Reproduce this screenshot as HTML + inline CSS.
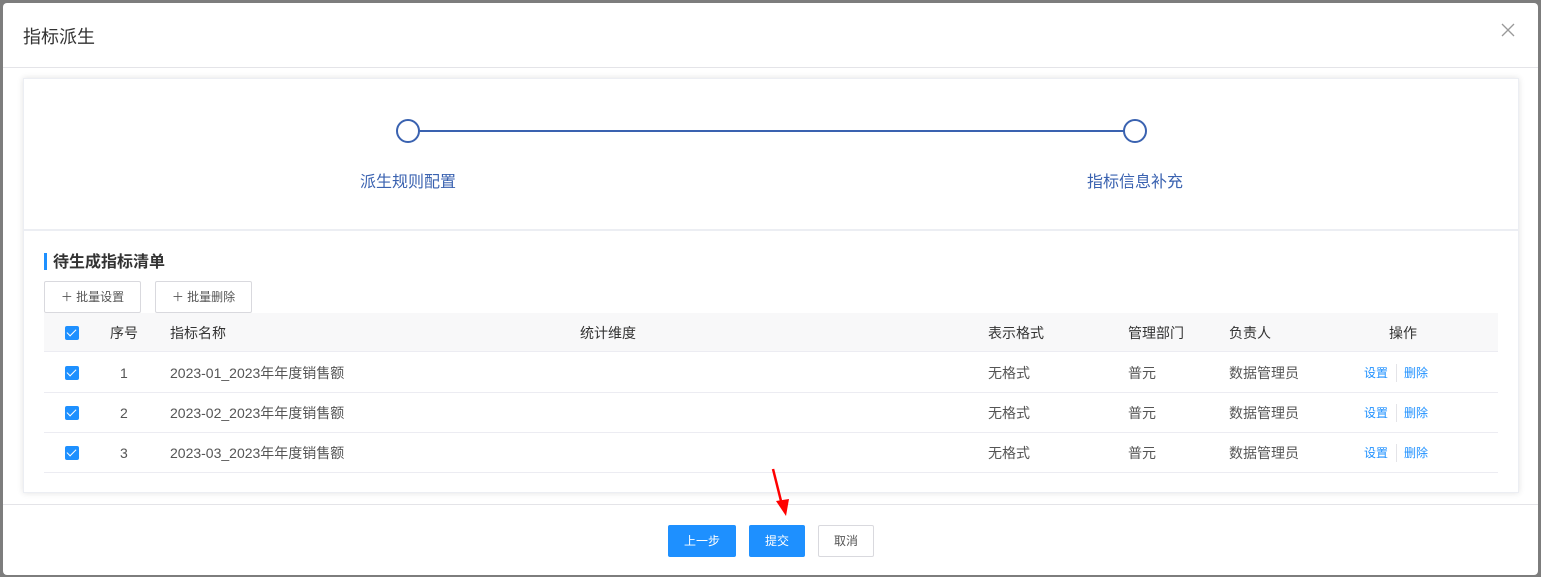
<!DOCTYPE html>
<html><head><meta charset="utf-8"><style>
*{margin:0;padding:0;box-sizing:border-box}
body{width:1541px;height:577px;background:#7d7d7d;font-family:"Liberation Sans","Noto Sans CJK SC",sans-serif;position:relative;overflow:hidden}
.dlg{position:absolute;left:3px;top:3px;width:1535px;height:572px;background:#fff;border-radius:4px;overflow:hidden}
.abs{position:absolute}
.t{font-size:18px;color:#333;left:20px;top:20px}
.hb{left:0;top:64px;width:1535px;height:1px;background:#e4e4e8}
.card{left:20px;top:75px;width:1496px;height:415px;background:#fff;box-shadow:0 0 6px rgba(0,0,0,.12);border:1px solid #eceef3}
.div{left:20px;top:226px;width:1496px;height:2px;background:#eceef3}
.circ{width:24px;height:24px;border:2px solid #3a62b0;border-radius:50%;background:#fff}
.lbl{font-size:16px;color:#3a62b0}
.sec{font-size:16px;font-weight:bold;color:#333}
.btn{border:1px solid #d9d9de;border-radius:2px;font-size:12px;color:#555;text-align:center;line-height:30px;background:#fff}
.th{left:41px;top:310px;width:1454px;height:39px;background:#f8f8f9;border-bottom:1px solid #ececf2}
.row{left:41px;width:1454px;height:40px;border-bottom:1px solid #ececf2}
.cell{font-size:14px;color:#555;line-height:16px}
.hc{color:#333}
.cb{width:14px;height:14px;background:#1e90ff;border-radius:2px}
.cb:after{content:"";position:absolute;left:4px;top:1px;width:4px;height:8px;border:solid #fff;border-width:0 1.5px 1.5px 0;transform:rotate(45deg)}
.lk{font-size:12px;color:#1e90ff}
.fb{left:0;top:501px;width:1535px;height:1px;background:#e4e4e8}
.pb{background:#1e90ff;color:#fff;border-radius:2px;font-size:12px;text-align:center;line-height:32px;height:32px}
</style></head><body>
<div class="dlg">
<div class="abs t">指标派生</div>
<svg class="abs" style="left:1498px;top:20px" width="14" height="14"><path d="M1 1L13 13M13 1L1 13" stroke="#999" stroke-width="1.3"/></svg>
<div class="abs hb"></div>
<div class="abs card"></div>
<div class="abs div"></div>
<div class="abs" style="left:405px;top:127px;width:727px;height:2px;background:#3a62b0"></div>
<div class="abs circ" style="left:393px;top:116px"></div>
<div class="abs circ" style="left:1120px;top:116px"></div>
<div class="abs lbl" style="left:357px;top:165px">派生规则配置</div>
<div class="abs lbl" style="left:1084px;top:165px">指标信息补充</div>
<div class="abs" style="left:41px;top:250px;width:3px;height:17px;background:#1e90ff"></div>
<div class="abs sec" style="left:50px;top:245px">待生成指标清单</div>
<div class="abs btn" style="left:41px;top:278px;width:97px;height:32px">＋ 批量设置</div>
<div class="abs btn" style="left:152px;top:278px;width:97px;height:32px">＋ 批量删除</div>
<div class="abs th"></div>
<div class="abs cb" style="left:62px;top:323px"></div>
<div class="abs cell hc" style="left:107px;top:322px">序号</div>
<div class="abs cell hc" style="left:167px;top:322px">指标名称</div>
<div class="abs cell hc" style="left:577px;top:322px">统计维度</div>
<div class="abs cell hc" style="left:985px;top:322px">表示格式</div>
<div class="abs cell hc" style="left:1125px;top:322px">管理部门</div>
<div class="abs cell hc" style="left:1226px;top:322px">负责人</div>
<div class="abs cell hc" style="left:1386px;top:322px">操作</div>
<div class="abs row" style="top:350px"></div>
<div class="abs row" style="top:390px"></div>
<div class="abs row" style="top:430px"></div>
<div class="abs cb" style="left:62px;top:363px"></div>
<div class="abs cell" style="left:117px;top:362px">1</div>
<div class="abs cell" style="left:167px;top:362px">2023-01_2023年年度销售额</div>
<div class="abs cell" style="left:985px;top:362px">无格式</div>
<div class="abs cell" style="left:1125px;top:362px">普元</div>
<div class="abs cell" style="left:1226px;top:362px">数据管理员</div>
<div class="abs lk" style="left:1361px;top:361px">设置</div>
<div class="abs" style="left:1393px;top:361px;width:1px;height:18px;background:#e4e4e8"></div>
<div class="abs lk" style="left:1401px;top:361px">删除</div>
<div class="abs cb" style="left:62px;top:403px"></div>
<div class="abs cell" style="left:117px;top:402px">2</div>
<div class="abs cell" style="left:167px;top:402px">2023-02_2023年年度销售额</div>
<div class="abs cell" style="left:985px;top:402px">无格式</div>
<div class="abs cell" style="left:1125px;top:402px">普元</div>
<div class="abs cell" style="left:1226px;top:402px">数据管理员</div>
<div class="abs lk" style="left:1361px;top:401px">设置</div>
<div class="abs" style="left:1393px;top:401px;width:1px;height:18px;background:#e4e4e8"></div>
<div class="abs lk" style="left:1401px;top:401px">删除</div>
<div class="abs cb" style="left:62px;top:443px"></div>
<div class="abs cell" style="left:117px;top:442px">3</div>
<div class="abs cell" style="left:167px;top:442px">2023-03_2023年年度销售额</div>
<div class="abs cell" style="left:985px;top:442px">无格式</div>
<div class="abs cell" style="left:1125px;top:442px">普元</div>
<div class="abs cell" style="left:1226px;top:442px">数据管理员</div>
<div class="abs lk" style="left:1361px;top:441px">设置</div>
<div class="abs" style="left:1393px;top:441px;width:1px;height:18px;background:#e4e4e8"></div>
<div class="abs lk" style="left:1401px;top:441px">删除</div>
<div class="abs fb"></div>
<div class="abs pb" style="left:665px;top:522px;width:68px">上一步</div>
<div class="abs pb" style="left:746px;top:522px;width:56px">提交</div>
<div class="abs btn" style="left:815px;top:522px;width:56px;height:32px">取消</div>
</div>
<svg class="abs" style="left:0;top:0" width="1541" height="577"><path d="M773 469L782 505" stroke="#f00" stroke-width="2.5"/><path d="M776 501L786 516L789 499Z" fill="#f00"/></svg>
</body></html>
